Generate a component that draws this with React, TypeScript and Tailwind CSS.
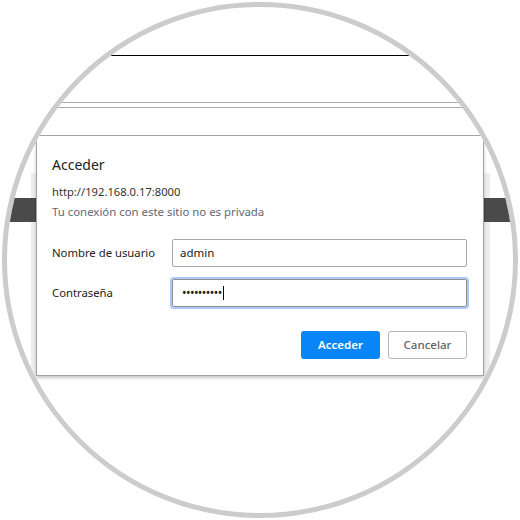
import React from "react";

export default function App() {
  const font = { fontFamily: '"Noto Sans", "Open Sans", sans-serif' };
  return (
    <div className="w-[520px] h-[520px] bg-white" style={font}>
      <div className="ml-[2px] pt-[2px]">
        <div className="w-[516px] h-[516px] rounded-full border-[5px] border-[#cccccc] overflow-hidden bg-white flex flex-col">
          <div className="h-[48px] shrink-0" />
          <div className="h-px bg-black shrink-0" />
          <div className="h-[46px] shrink-0" />
          <div className="h-px bg-[#a8a8a8] shrink-0" />
          <div className="h-[4px] shrink-0" />
          <div className="h-px bg-[#a8a8a8] shrink-0" />
          <div className="h-[27px] shrink-0" />
          <div className="h-px bg-[#a3a3a3] shrink-0" />
          <div className="flex shrink-0">
            <div className="w-[29px] flex flex-col items-end">
              <div className="h-[37px] w-full" />
              <div className="h-[25px] w-[5px] bg-[#eeeeee]" />
              <div className="h-[24px] w-full bg-[#4a4a4a]" />
              <div className="flex-1 w-[5px] bg-[#eeeeee]" />
            </div>
            <div className="w-[448px] border-x border-b border-[#a3a3a3] bg-white pt-[19px] pl-[15px] pr-[16px] pb-[16px] shadow-[0_2px_3px_rgba(0,0,0,0.22)] relative">
              <div className="text-[14px] leading-[20px] text-[#222222]">Acceder</div>
              <div className="mt-[9px] text-[11.2px] leading-[16px] text-[#333333]">http://192.168.0.17:8000</div>
              <div className="mt-[4px] text-[11.4px] leading-[16px] text-[#5f6773]">Tu conexión con este sitio no es privada</div>
              <div className="mt-[19px] flex items-center">
                <div className="w-[120px] text-[11.3px] text-[#222222]">Nombre de usuario</div>
                <div className="flex-1 h-[28px] rounded-[2px] border border-[#a9a9a9] flex items-center pl-[7px] text-[11.5px] text-[#222222]">admin</div>
              </div>
              <div className="mt-[12px] flex items-center">
                <div className="w-[120px] text-[11.3px] text-[#222222]">Contraseña</div>
                <div className="flex-1 h-[28px] rounded-[2px] border border-[#8f8f8f] shadow-[0_0_0_2px_#aac9f5] flex items-center pl-[9px] text-[12px] text-[#222222]">
                  <span className="tracking-[-0.55px]">••••••••••</span>
                  <span className="ml-[1px] w-px h-[14px] bg-black" />
                </div>
              </div>
              <div className="mt-[24px] flex justify-end gap-[8px]">
                <div className="w-[79px] h-[28px] rounded-[3px] bg-[#0886f8] text-white text-[11.5px] font-semibold flex items-center justify-center">Acceder</div>
                <div className="w-[79px] h-[28px] rounded-[3px] border border-[#b5b5b5] text-[#5f6368] text-[11.5px] font-medium flex items-center justify-center">Cancelar</div>
              </div>
            </div>
            <div className="flex-1 flex flex-col items-start">
              <div className="h-[37px] w-full" />
              <div className="h-[25px] w-[6px] bg-[#eeeeee]" />
              <div className="h-[24px] w-full bg-[#4a4a4a]" />
              <div className="flex-1 w-[6px] bg-[#eeeeee]" />
            </div>
          </div>
        </div>
      </div>
    </div>
  );
}
